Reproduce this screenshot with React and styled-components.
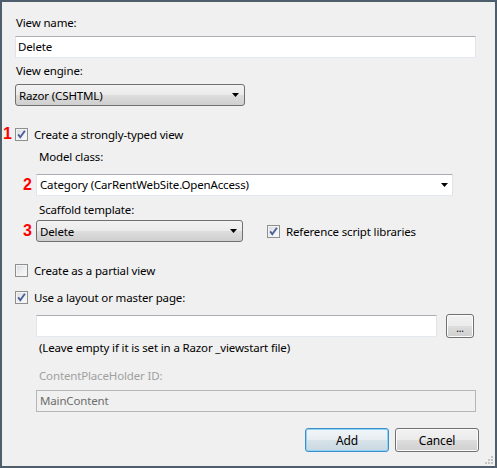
import React from 'react'
import styled, { createGlobalStyle } from 'styled-components'

const GlobalStyle = createGlobalStyle`
  html, body {
    margin: 0;
    padding: 0;
    background: #f0f0f0;
  }
  body {
    font-family: "Noto Sans", "Open Sans", sans-serif;
    font-size: 11.5px;
    letter-spacing: -0.15px;
    color: #000;
  }
`

const Window = styled.div`
  box-sizing: border-box;
  position: relative;
  width: 497px;
  height: 468px;
  border: 2px solid #4f5e6d;
  background: #f0f0f0;
  padding: 13px 19px 0 13px;
  display: flex;
  flex-direction: column;
`

const Label = styled.div`
  height: 16px;
  line-height: 16px;
  padding-left: ${p => p.$indent || 1}px;
  margin-top: ${p => p.$top || 0}px;
  margin-bottom: ${p => p.$bottom || 0}px;
  color: ${p => (p.$disabled ? '#a0a0a0' : '#000')};
  white-space: nowrap;
`

const TextBox = styled.div`
  box-sizing: border-box;
  height: 22px;
  line-height: 20px;
  padding-left: ${p => p.$pad || 2}px;
  background: ${p => (p.$disabled ? '#f0f0f0' : '#fff')};
  color: ${p => (p.$disabled ? '#6d6d6d' : '#000')};
  border: 1px solid #e2e3ea;
  border-top-color: #abadb3;
  border-bottom-color: #e3e9ef;
  ${p => p.$disabled && 'border-color: #b4b6b9;'}
  width: ${p => (p.$width ? `${p.$width}px` : 'auto')};
  flex: ${p => (p.$grow ? 1 : 'none')};
  margin-top: ${p => p.$top || 0}px;
  position: relative;
  display: flex;
  align-items: center;
  white-space: nowrap;
`

const Select = styled.div`
  box-sizing: border-box;
  position: relative;
  width: ${p => p.$width}px;
  height: 22px;
  padding-left: 3px;
  border: 1px solid #707070;
  border-radius: 3px;
  background: linear-gradient(#f2f2f2 0%, #ebebeb 50%, #dddddd 51%, #cfcfcf 100%);
  display: flex;
  align-items: center;
  white-space: nowrap;
`

const Arrow = styled.svg`
  position: absolute;
  right: ${p => p.$right || 5}px;
  top: 50%;
  margin-top: -2px;
`

const DropArrow = ({ right }) => (
  <Arrow $right={right} width="7" height="4" viewBox="0 0 7 4">
    <path d="M0 0 H7 L3.5 4 Z" fill="#000" />
  </Arrow>
)

const CheckRow = styled.div`
  position: relative;
  display: flex;
  align-items: center;
  height: 16px;
  margin-top: ${p => p.$top || 0}px;
  gap: 6px;
  white-space: nowrap;
`

const Box = styled.span`
  box-sizing: border-box;
  width: 13px;
  height: 13px;
  border: 1px solid #8e8f8f;
  background: linear-gradient(135deg, #d6d9df 0%, #eeeff1 55%, #fbfbfb 100%);
  box-shadow: inset 0 0 0 1px #f4f4f4;
  display: flex;
  align-items: center;
  justify-content: center;
  flex: none;
`

const CheckBox = ({ checked }) => (
  <Box>
    {checked && (
      <svg width="11" height="11" viewBox="0 0 11 11">
        <path d="M2.2 5.4 L4.3 8.2 L8.9 1.8" fill="none" stroke="#4a5f97" strokeWidth="1.9" />
      </svg>
    )}
  </Box>
)

const Marker = styled.span`
  position: absolute;
  left: ${p => p.$left}px;
  top: 0;
  bottom: 0;
  display: flex;
  align-items: center;
  font-family: "Liberation Sans", Arial, sans-serif;
  font-weight: bold;
  font-size: 16px;
  letter-spacing: 0;
  color: #f00;
`

const Section = styled.div`
  display: flex;
  flex-direction: column;
  padding-left: 21px;
`

const FieldRow = styled.div`
  position: relative;
  display: flex;
  align-items: center;
  margin-top: ${p => p.$top || 0}px;
  gap: ${p => p.$gap || 0}px;
`

const Button = styled.div`
  box-sizing: border-box;
  width: ${p => p.$width}px;
  height: ${p => p.$height}px;
  border: 1px solid ${p => (p.$default ? '#3c8fc8' : '#707070')};
  border-radius: 3px;
  background: ${p =>
    p.$default
      ? 'linear-gradient(#f1f5f8 0%, #e6edf2 50%, #d7e2e9 51%, #cbd8e1 100%)'
      : 'linear-gradient(#f2f2f2 0%, #ebebeb 50%, #dddddd 51%, #cfcfcf 100%)'};
  box-shadow: ${p => (p.$default ? 'inset 0 0 0 1px #8fd3f5' : 'inset 0 0 0 1px #fcfcfc')};
  display: flex;
  align-items: center;
  justify-content: center;
  padding-top: ${p => p.$drop || 0}px;
  margin-right: ${p => p.$right || 0}px;
  font-size: ${p => p.$small || 12}px;
`

const ButtonBar = styled.div`
  display: flex;
  justify-content: flex-end;
  gap: 6px;
  margin-top: 16px;
  margin-right: -3px;
`

const Grip = styled.svg`
  position: absolute;
  right: 1px;
  bottom: 1px;
`

export default function App() {
  return (
    <>
      <GlobalStyle />
      <Window>
        <Label $bottom={5}>View name:</Label>
        <TextBox>Delete</TextBox>

        <Label $top={5} $bottom={5}>View engine:</Label>
        <Select $width={230}>
          Razor (CSHTML)
          <DropArrow />
        </Select>

        <CheckRow $top={20}>
          <Marker $left={-12}>1</Marker>
          <CheckBox checked />
          Create a strongly-typed view
        </CheckRow>

        <Section>
          <Label $indent={3} $top={7} $bottom={9}>Model class:</Label>
          <FieldRow>
            <Marker $left={-13}>2</Marker>
            <TextBox $width={417} $pad={3}>
              Category (CarRentWebSite.OpenAccess)
              <DropArrow right={4} />
            </TextBox>
          </FieldRow>

          <Label $indent={3} $top={6} $bottom={2}>Scaffold template:</Label>
          <FieldRow $gap={24}>
            <Marker $left={-13}>3</Marker>
            <Select $width={207}>
              Delete
              <DropArrow />
            </Select>
            <CheckRow>
              <CheckBox checked />
              Reference script libraries
            </CheckRow>
          </FieldRow>
        </Section>

        <CheckRow $top={20}>
          <CheckBox />
          Create as a partial view
        </CheckRow>
        <CheckRow $top={11}>
          <CheckBox checked />
          Use a layout or master page:
        </CheckRow>

        <Section>
          <FieldRow $top={9} $gap={9}>
            <TextBox $grow />
            <Button $width={28} $height={24} $right={2} $small={10} $drop={3}>...</Button>
          </FieldRow>
          <Label $indent={3} $top={2}>(Leave empty if it is set in a Razor _viewstart file)</Label>
          <Label $indent={3} $top={12} $bottom={6} $disabled>ContentPlaceHolder ID:</Label>
          <TextBox $disabled $pad={3}>MainContent</TextBox>
        </Section>

        <ButtonBar>
          <Button $default $width={84} $height={24}>Add</Button>
          <Button $width={84} $height={24}>Cancel</Button>
        </ButtonBar>

        <Grip width="12" height="12" viewBox="0 0 12 12">
          {[[9, 3], [9, 6], [6, 6], [9, 9], [6, 9], [3, 9]].map(([x, y]) => (
            <rect key={`${x}-${y}`} x={x} y={y} width="2" height="2" fill="#c4c4c4" />
          ))}
        </Grip>
      </Window>
    </>
  )
}
